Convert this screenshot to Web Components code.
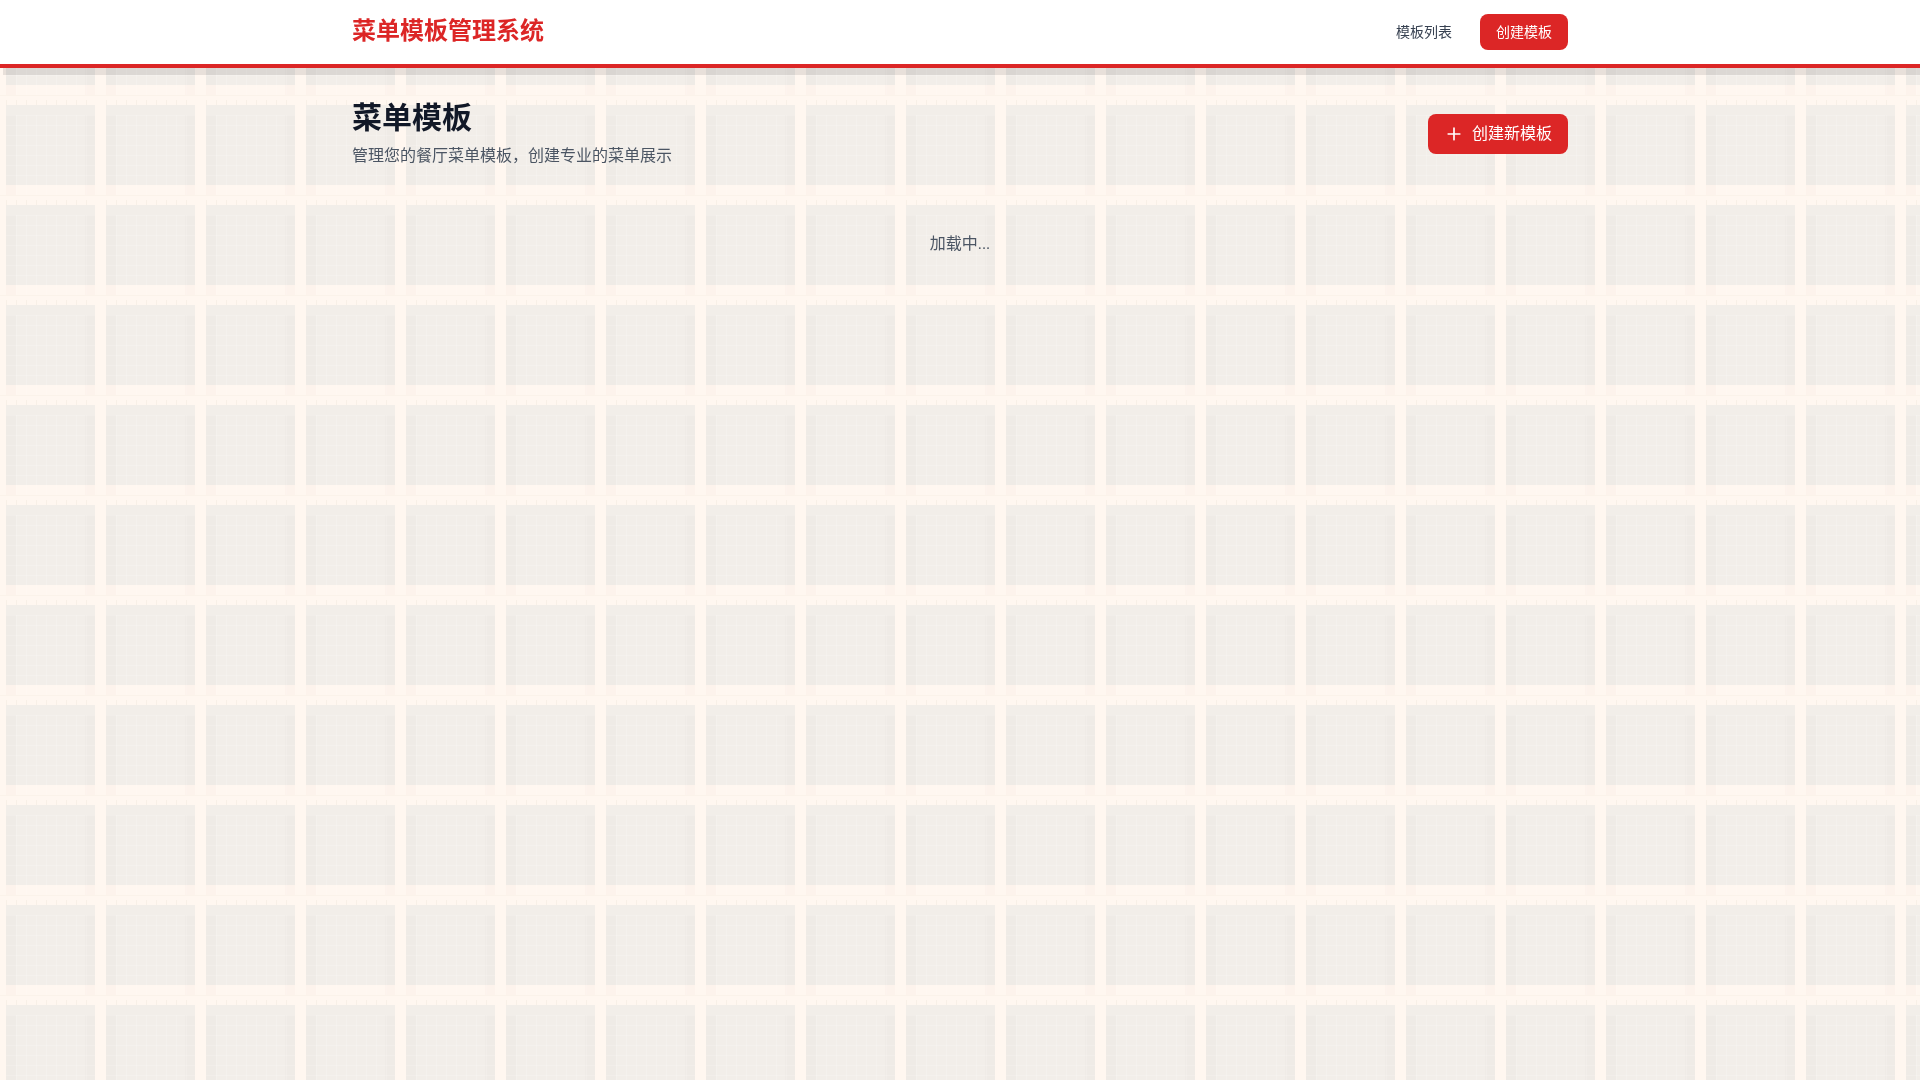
<!DOCTYPE html>
<html lang="zh">
<head>
<meta charset="utf-8">
<title>菜单模板管理系统</title>
<style>
  html, body { margin: 0; height: 100%; overflow: hidden; }
  body {
    font-family: Roboto, "Noto Sans CJK SC", sans-serif;
    background-color: #fff7f0;
  }
</style>
</head>
<body>
<template id="plaid-bg-tpl">
  <style>
    :host { position: fixed; inset: 0; z-index: -1; display: block; }
    svg { display: block; width: 100%; height: 100%; }
  </style>
  <svg xmlns="http://www.w3.org/2000/svg" shape-rendering="crispEdges">
    <defs>
      <pattern id="plaid" width="100" height="100" patternUnits="userSpaceOnUse">
        <!-- big square -->
        <rect x="6" y="5" width="89" height="80" fill="#f2eee9"/>
        <!-- tinted edge columns -->
        <rect x="6" y="15" width="10" height="70" fill="#000" fill-opacity=".012"/>
        <rect x="85" y="15" width="10" height="70" fill="#000" fill-opacity=".012"/>
        <rect x="6" y="85" width="10" height="10" fill="#c08080" fill-opacity=".03"/>
        <rect x="85" y="85" width="10" height="10" fill="#c08080" fill-opacity=".03"/>
        <!-- fine lines -->
        <g fill="#fff" fill-opacity=".16">
          <rect x="16" y="15" width="1" height="80"/><rect x="26" y="15" width="1" height="80"/>
          <rect x="36" y="15" width="1" height="80"/><rect x="46" y="15" width="1" height="80"/>
          <rect x="56" y="15" width="1" height="80"/><rect x="66" y="15" width="1" height="80"/>
          <rect x="76" y="15" width="1" height="80"/><rect x="86" y="15" width="1" height="80"/>
          <rect x="6" y="15" width="89" height="1"/><rect x="6" y="25" width="89" height="1"/>
          <rect x="6" y="35" width="89" height="1"/><rect x="6" y="45" width="89" height="1"/>
          <rect x="6" y="55" width="89" height="1"/><rect x="6" y="65" width="89" height="1"/>
          <rect x="6" y="75" width="89" height="1"/>
        </g>
        <rect x="0" y="95" width="100" height="1" fill="#fbf3ea"/>
        <!-- ticks above each square -->
        <g fill="#f8f0e7">
          <rect x="6" y="0" width="1" height="5"/><rect x="16" y="0" width="1" height="5"/>
          <rect x="26" y="0" width="1" height="5"/><rect x="36" y="0" width="1" height="5"/>
          <rect x="46" y="0" width="1" height="5"/><rect x="56" y="0" width="1" height="5"/>
          <rect x="66" y="0" width="1" height="5"/><rect x="76" y="0" width="1" height="5"/>
          <rect x="86" y="0" width="1" height="5"/>
        </g>
      </pattern>
    </defs>
    <rect width="100%" height="100%" fill="url(#plaid)"/>
  </svg>
</template>
<template id="app-header-tpl">
  <style>
    :host { display: block; background: #fff; border-bottom: 4px solid #dc2626; box-shadow: 3px 7px 0 rgba(0,0,0,.09); }
    .bar { max-width: 1216px; margin: 0 auto; padding: 0 32px; height: 64px; display: flex; align-items: center; justify-content: space-between; }
    .logo { font-size: 24px; line-height: 32px; font-weight: 700; color: #dc2626; transform: translateY(-1px); }
    nav { display: flex; align-items: center; gap: 16px; }
    a { font-size: 14px; line-height: 20px; padding: 8px 12px; border-radius: 8px; color: #374151; }
    a.primary { background: #dc2626; color: #fff; padding: 8px 16px; }
  </style>
  <div class="bar">
    <div class="logo">菜单模板管理系统</div>
    <nav><a>模板列表</a><a class="primary">创建模板</a></nav>
  </div>
</template>
<template id="template-list-tpl">
  <style>
    :host { display: block; max-width: 1216px; margin: 0 auto; padding: 32px; }
    .head { display: flex; align-items: center; justify-content: space-between; margin-bottom: 32px; }
    h1 { margin: 0 0 8px; font-size: 30px; line-height: 36px; font-weight: 700; color: #111827; }
    p { margin: 0; font-size: 16px; line-height: 24px; color: #4b5563; }
    button { display: flex; align-items: center; gap: 8px; height: 40px; padding: 0 16px; border: 0; border-radius: 8px; background: #dc2626; color: #fff; font: inherit; font-size: 16px; line-height: 24px; }
    svg { width: 20px; height: 20px; }
    .loading { padding: 32px 0; text-align: center; font-size: 16px; line-height: 24px; color: #4b5563; }
  </style>
  <div class="head">
    <div><h1>菜单模板</h1><p>管理您的餐厅菜单模板，创建专业的菜单展示</p></div>
    <button><svg viewBox="0 0 24 24" fill="none" stroke="currentColor" stroke-width="2" stroke-linecap="round"><path d="M12 5v14M5 12h14"/></svg>创建新模板</button>
  </div>
  <div class="loading">加载中...</div>
</template>
<plaid-bg></plaid-bg>
<app-header></app-header>
<template-list></template-list>
<script>
function define(name, tpl) {
  customElements.define(name, class extends HTMLElement {
    constructor() {
      super();
      this.attachShadow({ mode: 'open' }).appendChild(document.getElementById(tpl).content.cloneNode(true));
    }
  });
}
define('plaid-bg', 'plaid-bg-tpl');
define('app-header', 'app-header-tpl');
define('template-list', 'template-list-tpl');
</script>
</body>
</html>
